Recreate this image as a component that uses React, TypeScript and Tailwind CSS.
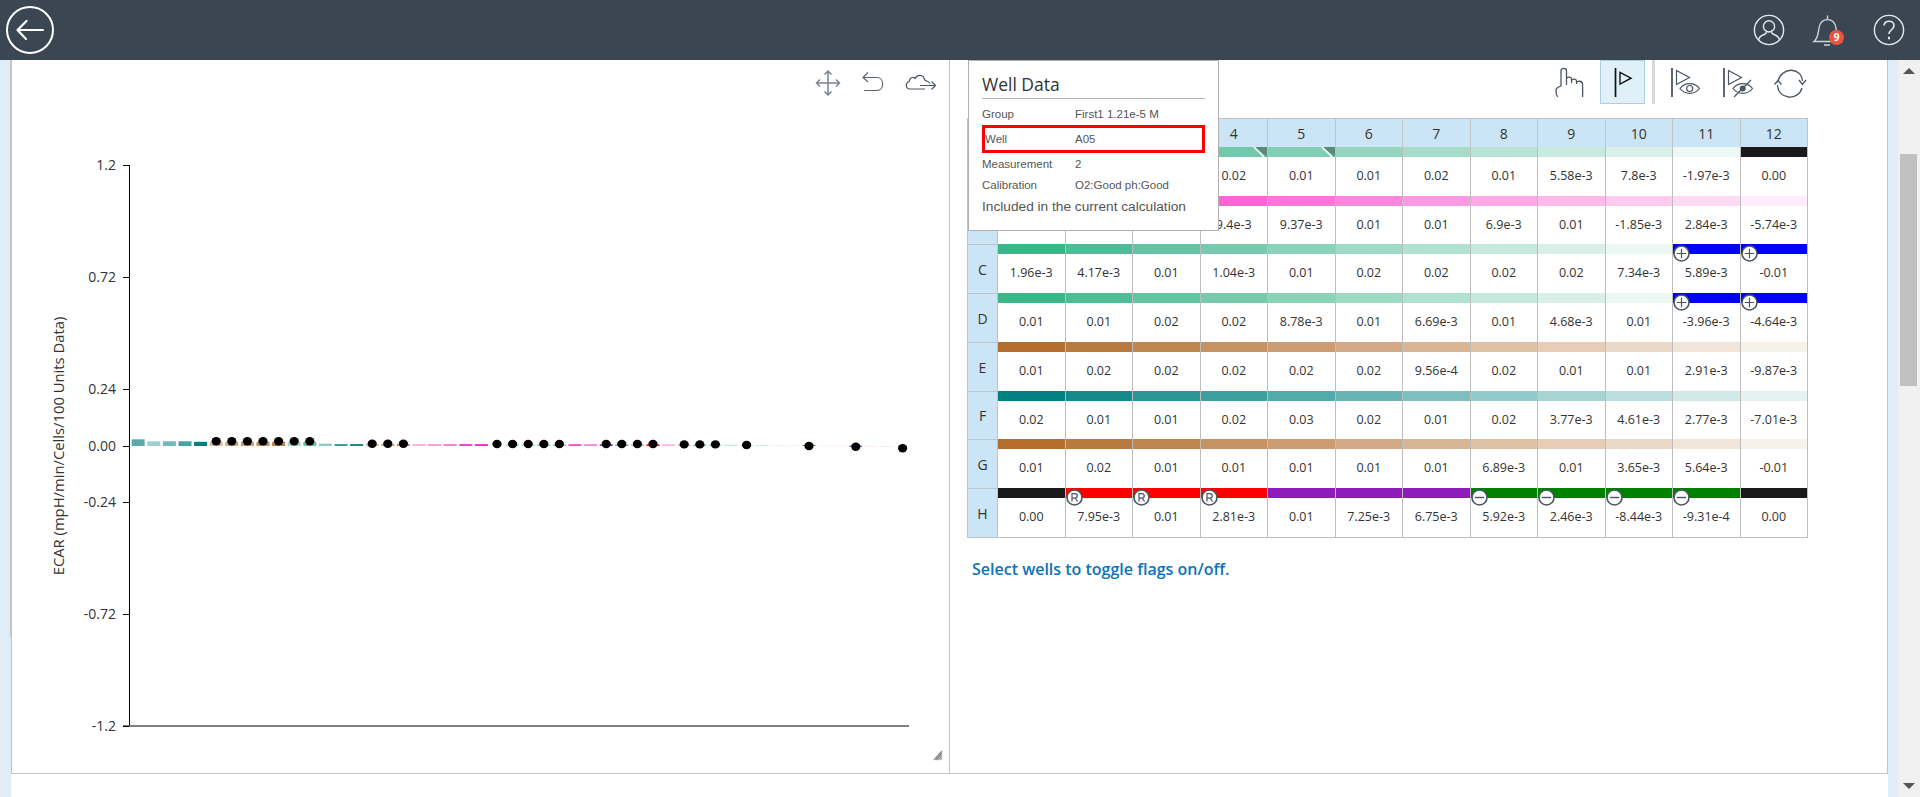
import type { ReactNode } from "react";

const FONT = "font-['Open_Sans',sans-serif]";
const ICON = "#4a5663";

// y position on the page for a given ECAR value
const yOf = (v: number) => 445.5 - v * 233.75;

const ticks = ["1.2", "0.72", "0.24", "0.00", "-0.24", "-0.72", "-1.2"];
const tickValues = [1.2, 0.72, 0.24, 0, -0.24, -0.72, -1.2];

type Point = { color: string; top: number; bottom?: number; dot?: number };

const chartPoints: Point[] = [
  { color: "#5ba9a9", top: 439.3, bottom: 446 },
  { color: "#9fd0d0", top: 441.3 },
  { color: "#72b9b9", top: 441.3 },
  { color: "#45a3a3", top: 441.3 },
  { color: "#00807e", top: 441.8 },
  { color: "#dcb89a", top: 441.8, dot: 441.3 },
  { color: "#d4a67e", top: 441.8, dot: 441.3 },
  { color: "#cc9a6c", top: 441.8, dot: 441.3 },
  { color: "#c58d5a", top: 441.8, dot: 441.3 },
  { color: "#bd7f45", top: 441.8, dot: 441.3 },
  { color: "#9fdcc3", top: 441.8, dot: 441.3 },
  { color: "#62c49c", top: 441.8, dot: 441.3 },
  { color: "#8ecbcb", top: 443.6 },
  { color: "#3f9f9f", top: 444 },
  { color: "#1a8c8c", top: 444 },
  { color: "#e0c4aa", top: 444, dot: 443.7 },
  { color: "#d4a67e", top: 444, dot: 443.7 },
  { color: "#c58d5a", top: 444, dot: 443.7 },
  { color: "#ffb0e6", top: 444 },
  { color: "#ff9de0", top: 444 },
  { color: "#ff7fd8", top: 444 },
  { color: "#ff3fc9", top: 444 },
  { color: "#ff33c6", top: 444 },
  { color: "#d7f0e6", top: 444.4, dot: 444 },
  { color: "#9fdcc3", top: 444.4, dot: 444 },
  { color: "#9fdcc3", top: 444.4, dot: 444 },
  { color: "#7dd0ae", top: 444.4, dot: 444 },
  { color: "#7dd0ae", top: 444.4, dot: 444 },
  { color: "#ff47cc", top: 444.2 },
  { color: "#ff7fd8", top: 444.2 },
  { color: "#8e1cb8", top: 444.4, dot: 444 },
  { color: "#62c49c", top: 444.4, dot: 444 },
  { color: "#d8b493", top: 444.4, dot: 444 },
  { color: "#ff0000", top: 444.4, dot: 444 },
  { color: "#ffb0e6", top: 444.4 },
  { color: "#e0c4aa", top: 444.6, dot: 444.4 },
  { color: "#62c49c", top: 444.6, dot: 444.4 },
  { color: "#b5e3d1", top: 444.6, dot: 444.4 },
  { color: "#c9e2e2", top: 444.8 },
  { color: "#c9e2e2", top: 445, dot: 445 },
  { color: "#cce4e4", top: 445 },
  { color: "#fdeaf7", top: 445 },
  { color: "#ecf7f3", top: 445 },
  { color: "#008000", top: 445.2, dot: 446 },
  { color: "#fdeaf7", top: 445.4, bottom: 446.4 },
  { color: "#fdeaf7", top: 445.4, bottom: 446.4 },
  { color: "#0000ff", top: 445.8, bottom: 446.6, dot: 446.7 },
  { color: "#fdeaf7", top: 446, bottom: 447 },
  { color: "#e8f2f2", top: 446, bottom: 447 },
  { color: "#f5efe8", top: 446.5, bottom: 447.5, dot: 448.3 },
];

// fade towards white used by the plate's colour bars, kept opaque so grid lines don't show through
const fade = (rgb: number[], count: number) =>
  Array.from({ length: count }, (_, i) => {
    const a = count > 1 ? 1 - (i * 0.9) / (count - 1) : 1;
    const [r, g, b] = rgb.map((v) => Math.round(255 - (255 - v) * a));
    return `rgb(${r},${g},${b})`;
  });

const green = [60, 181, 137];
const brown = [179, 110, 46];
const BLACK = "#1a1a1a";

type Row = { label: string; height: string; bars: string[]; values: string[] };

// labels and values that sit under the well popup are left blank
const rows: Row[] = [
  {
    label: "",
    height: "h-[49px]",
    bars: [...fade(green, 11), BLACK],
    values: ["", "", "", "0.02", "0.01", "0.01", "0.02", "0.01", "5.58e-3", "7.8e-3", "-1.97e-3", "0.00"],
  },
  {
    label: "",
    height: "h-[48px]",
    bars: fade([255, 51, 198], 12),
    values: ["", "", "", "9.4e-3", "9.37e-3", "0.01", "0.01", "6.9e-3", "0.01", "-1.85e-3", "2.84e-3", "-5.74e-3"],
  },
  {
    label: "C",
    height: "h-[49px]",
    bars: [...fade(green, 10), "#0000ff", "#0000ff"],
    values: ["1.96e-3", "4.17e-3", "0.01", "1.04e-3", "0.01", "0.02", "0.02", "0.02", "0.02", "7.34e-3", "5.89e-3", "-0.01"],
  },
  {
    label: "D",
    height: "h-[49px]",
    bars: [...fade(green, 10), "#0000ff", "#0000ff"],
    values: ["0.01", "0.01", "0.02", "0.02", "8.78e-3", "0.01", "6.69e-3", "0.01", "4.68e-3", "0.01", "-3.96e-3", "-4.64e-3"],
  },
  {
    label: "E",
    height: "h-[49px]",
    bars: fade(brown, 12),
    values: ["0.01", "0.02", "0.02", "0.02", "0.02", "0.02", "9.56e-4", "0.02", "0.01", "0.01", "2.91e-3", "-9.87e-3"],
  },
  {
    label: "F",
    height: "h-[48px]",
    bars: fade([0, 128, 128], 12),
    values: ["0.02", "0.01", "0.01", "0.02", "0.03", "0.02", "0.01", "0.02", "3.77e-3", "4.61e-3", "2.77e-3", "-7.01e-3"],
  },
  {
    label: "G",
    height: "h-[49px]",
    bars: fade(brown, 12),
    values: ["0.01", "0.02", "0.01", "0.01", "0.01", "0.01", "0.01", "6.89e-3", "0.01", "3.65e-3", "5.64e-3", "-0.01"],
  },
  {
    label: "H",
    height: "h-[49px]",
    bars: [BLACK, "#ff0000", "#ff0000", "#ff0000", "#8e1cb8", "#8e1cb8", "#8e1cb8", "#008000", "#008000", "#008000", "#008000", BLACK],
    values: ["0.00", "7.95e-3", "0.01", "2.81e-3", "0.01", "7.25e-3", "6.75e-3", "5.92e-3", "2.46e-3", "-8.44e-3", "-9.31e-4", "0.00"],
  },
];

const marks: Record<string, "R" | "plus" | "minus"> = {
  H1: "R", H2: "R", H3: "R",
  H7: "minus", H8: "minus", H9: "minus", H10: "minus",
  C10: "plus", C11: "plus", D10: "plus", D11: "plus",
};
const cornerFlags = ["A3", "A4"];

const WellMark = ({ kind }: { kind: "R" | "plus" | "minus" }) => (
  <svg viewBox="0 0 17 17" className="absolute left-[0px] top-[1px] w-[17px] h-[17px]">
    <circle cx="8.5" cy="8.5" r="7.5" fill="#fff" stroke={ICON} strokeWidth="1.6" />
    {kind === "R" && (
      <path d="M6 12.5V4.6h3a2.2 2.2 0 0 1 0 4.5H6m3.2 0 2.4 3.4" fill="none" stroke={ICON} strokeWidth="1.2" />
    )}
    {kind === "plus" && <path d="M3.8 8.5h9.4M8.5 3.8v9.4" stroke={ICON} strokeWidth="1.2" />}
    {kind === "minus" && <path d="M3.8 8.5h9.4" stroke={ICON} strokeWidth="1.4" />}
  </svg>
);

const CornerFlag = () => (
  <svg viewBox="0 0 14 10" className="absolute right-0 top-0 w-[14px] h-[10px]">
    <path d="M2 0h12v10z" fill="#5c8a78" />
    <path d="M1 0l10 10" stroke="#fff" strokeWidth="1.5" />
  </svg>
);

const Svg = ({ box, w, h, className, children }: { box: string; w: string; h: string; className?: string; children: ReactNode }) => (
  <svg viewBox={box} className={`${w} ${h} shrink-0 ${className ?? ""}`} fill="none">
    {children}
  </svg>
);

function Header() {
  return (
    <header className="h-[60px] shrink-0 bg-[#3a4652] flex items-center justify-between">
      <svg viewBox="0 0 60 60" className="w-[60px] h-[60px]" fill="none" stroke="#fff">
        <circle cx="30" cy="30" r="23" strokeWidth="2" />
        <path d="M43 30H18M26.5 21 17.5 30l8.5 9" strokeWidth="2.2" strokeLinecap="round" strokeLinejoin="round" />
      </svg>
      <div className="flex items-center">
        <svg viewBox="0 0 32 32" className="w-[32px] h-[32px]" fill="none" stroke="#e6e9ec" strokeWidth="1.4">
          <circle cx="16" cy="16" r="14.6" />
          <circle cx="16" cy="12.4" r="5.6" />
          <path d="M5.6 26c.5-4.4 4.4-5 6.6-6 .9-.5 1-1.2.8-2M26.4 26c-.5-4.4-4.4-5-6.6-6-.9-.5-1-1.2-.8-2" />
        </svg>
        <div className="relative ml-[26px] mt-[1px] w-[36px] h-[34px]">
          <svg viewBox="0 0 36 34" className="w-[36px] h-[34px]" fill="none" stroke="#cfd4d9" strokeWidth="1.4">
            <path d="M3 27.500c4-3 4-7.500 5-13.500.8-5 4-8.400 8.500-8.400s7.700 3.400 8.500 8.400c1 6 1 10.500 5 13.500z" />
            <path d="M16.500 5.600V1.500M13 31h6" />
          </svg>
          <span className={`absolute left-[18px] top-[16px] w-[15px] h-[15px] rounded-full bg-[#f0533a] text-white text-[10px] leading-[15px] font-bold text-center ${FONT}`}>
            9
          </span>
        </div>
        <svg viewBox="0 0 32 32" className="ml-[26px] mr-[15px] w-[32px] h-[32px]" fill="none" stroke="#e6e9ec" strokeWidth="1.4">
          <circle cx="16" cy="16" r="14.6" />
          <path d="M11 11.500c.4-3 2.600-4.200 5-4.200 2.800 0 5 1.700 5 4.300 0 4-5 4.300-5 8.400" strokeWidth="1.6" />
          <path d="M16 22.800v2.400" strokeWidth="2" />
        </svg>
      </div>
    </header>
  );
}

function ChartToolbar() {
  return (
    <div className="h-[45px] shrink-0 flex justify-end items-center pr-[11px]">
      <Svg box="815 62 26 30" w="w-[26px]" h="h-[30px]">
        <path d="M828 65v24M816.500 77h23M824.500 68.500 828 65l3.500 3.500M824.500 85.500 828 89l3.500-3.500M820 73.500 816.500 77l3.500 3.500M836 73.500l3.500 3.500-3.500 3.500" stroke="#7a858f" strokeWidth="1.5" />
      </Svg>
      <Svg box="860 62 26 30" w="w-[26px]" h="h-[30px]" className="ml-[19px]">
        <path d="M868 66.500 863 71.500l5 4.500M863 71.500h14c7.500 0 7.500 13 0 13h-13" stroke="#5b6671" strokeWidth="1.2" />
      </Svg>
      <Svg box="905 62 33 30" w="w-[33px]" h="h-[30px]" className="ml-[19px]">
        <path d="M925 83h-15c-4.500 0-5-6-.8-7.500.2-4 3.800-5 6-3 2-4.500 8.200-4 9.300 1 .4 1.500 4 1.500 5.500 3.800" stroke="#4a5663" strokeWidth="1.200" />
        <path d="M920 79.500h15.500M931.500 75.500l4 4-4 4" stroke="#4a5663" strokeWidth="1.200" />
      </Svg>
    </div>
  );
}

function Chart() {
  return (
    <svg viewBox="12 105 937 668" className="w-[937px] h-[668px] shrink-0">
      <text
        transform="translate(64 446) rotate(-90)"
        textAnchor="middle"
        className={`${FONT} text-[14.8px] fill-[#333]`}
      >
        ECAR (mpH/min/Cells/100 Units Data)
      </text>
      <line x1="129.500" y1="165" x2="129.500" y2="726" stroke="#000" />
      <line x1="123" y1="726" x2="909" y2="726" stroke="#555" strokeWidth="1.6" />
      {ticks.map((t, i) => (
        <g key={t}>
          <line x1="123" x2="129" y1={Math.round(yOf(tickValues[i])) + 0.5} y2={Math.round(yOf(tickValues[i])) + 0.5} stroke="#000" />
          <text x="116" y={yOf(tickValues[i]) + 5} textAnchor="end" className={`${FONT} text-[14px] fill-[#333]`}>
            {t}
          </text>
        </g>
      ))}
      {chartPoints.map((p, i) => {
        const x = 131.700 + i * 15.6;
        const bottom = p.bottom ?? 446;
        return <rect key={i} x={x} y={p.top} width="13" height={bottom - p.top} fill={p.color} />;
      })}
      {chartPoints.map((p, i) =>
        p.dot !== undefined ? <ellipse key={i} cx={131.700 + i * 15.6 + 6.5} cy={p.dot} rx="4.600" ry="4.200" fill="#000" /> : null
      )}
      <path d="M934 760l8-9M936 760l6-7M938 760l4-4.500M940.500 760l1.500-2" stroke="#8b8b8b" strokeWidth="1.200" />
    </svg>
  );
}

const PlateToolbar = () => (
  <div className="h-[44px] shrink-0 flex items-start justify-end pr-[80px]">
    <Svg box="1550 60 42 44" w="w-[42px]" h="h-[44px]">
      <path
        d="M1557.500 97c-1-2-2-4-1.500-7 .3-1.500 1.500-3 5-4V71c0-3.500 5.500-3.500 5.500 0v14-6c0-2.500 5-2.500 5 0v4-2c0-2.500 5-2.500 5 0v3-1c0-2.500 6-2.500 6 1 0 4 .5 8 0 13"
        stroke="#4a5663"
        strokeWidth="1.300"
      />
    </Svg>
    <div className="w-[45px] h-[44px] ml-[8px] bg-[#dff0f8] border border-[#a8d0e0] shrink-0">
      <Svg box="1601 61 43 42" w="w-[43px]" h="h-[42px]">
        <path d="M1615.500 68v29" stroke="#111" strokeWidth="1.700" />
        <path d="M1620 72.500v11.500l11-5.800z" stroke="#111" strokeWidth="1.400" />
      </Svg>
    </div>
    <div className="w-[3px] h-[44px] ml-[7px] bg-[#d8d8d8] shrink-0" />
    <Svg box="1665 60 40 44" w="w-[40px]" h="h-[44px]" className="ml-[10px]">
      <path d="M1672 68v29" stroke="#4a5663" strokeWidth="1.800" />
      <path d="M1676.500 70.500v14l13-7z" stroke="#4a5663" strokeWidth="1.200" />
      <path d="M1680 88.500c5-6.500 14.500-6.500 19.500 0-5 6.500-14.500 6.500-19.500 0z" stroke="#4a5663" strokeWidth="1.200" />
      <circle cx="1689.700" cy="88.500" r="3" stroke="#4a5663" strokeWidth="1.200" />
    </Svg>
    <Svg box="1719 60 40 44" w="w-[40px]" h="h-[44px]" className="ml-[14px]">
      <path d="M1724 68v29" stroke="#4a5663" strokeWidth="1.800" />
      <path d="M1728.500 70.500v14l13-7z" stroke="#4a5663" strokeWidth="1.200" />
      <path d="M1733 88.500c5-6.500 14.500-6.500 19.500 0-5 6.500-14.500 6.500-19.500 0z" stroke="#4a5663" strokeWidth="1.200" />
      <circle cx="1742.700" cy="88.500" r="3" fill="#4a5663" />
      <path d="M1734 97l17-17" stroke="#4a5663" strokeWidth="1.300" />
    </Svg>
    <Svg box="1773 60 34 44" w="w-[34px]" h="h-[44px]" className="ml-[14px]">
      <path d="M1777.500 85c.5 15 21 16 24.500 3M1802.500 81c-1-14-21-15-25 1" stroke="#4a5663" strokeWidth="1.300" />
      <path d="M1774.500 84.500l3.500-4 3.500 4M1799 80l3.500 4.500 3.500-4.500" stroke="#4a5663" strokeWidth="1.300" />
    </Svg>
  </div>
);

const HEADER_CELL = "bg-[#cbe5f7] border border-[#bdc5ca] text-[14px] text-[#333] font-normal p-0 text-center";

function PlateTable() {
  return (
    <table className={`${FONT} w-[840px] table-fixed border-collapse`}>
      <colgroup>
        <col className="w-[30px]" />
        {Array.from({ length: 12 }, (_, i) => (
          <col key={i} className="w-[67.5px]" />
        ))}
      </colgroup>
      <thead>
        <tr className="h-[29px]">
          <th className={HEADER_CELL} />
          {Array.from({ length: 12 }, (_, i) => (
            <th key={i} className={HEADER_CELL}>
              {i + 1}
            </th>
          ))}
        </tr>
      </thead>
      <tbody>
        {rows.map((row, r) => (
          <tr key={r} className={row.height}>
            <th className={HEADER_CELL}>{row.label}</th>
            {row.values.map((value, c) => {
              const id = `${"ABCDEFGH"[r]}${c}`;
              return (
                <td key={c} className="p-0 border border-[#bdbdbd] align-top">
                  <div className="relative">
                    <div className="relative -mt-[1px] h-[10px]" style={{ background: row.bars[c] }}>
                      {cornerFlags.includes(id) && <CornerFlag />}
                    </div>
                    <div className="h-[38px] flex items-center justify-center text-[12.5px] text-[#333]">{value}</div>
                    {marks[id] && <WellMark kind={marks[id]} />}
                  </div>
                </td>
              );
            })}
          </tr>
        ))}
      </tbody>
    </table>
  );
}

const infoRows = [
  { label: "Group", value: "First1 1.21e-5 M", box: false, h: "h-[22px]" },
  { label: "Well", value: "A05", box: true, h: "h-[28px]" },
  { label: "Measurement", value: "2", box: false, h: "h-[22px]" },
  { label: "Calibration", value: "O2:Good ph:Good", box: false, h: "h-[20px]" },
];

function WellPopup() {
  return (
    <div className="absolute left-[18px] top-0 w-[251px] h-[171px] bg-white border border-[#b0b0b0] px-[13px] font-['Liberation_Sans',sans-serif] text-[#555]">
      <h3 className={`${FONT} h-[38px] pt-[11px] text-[17.5px] leading-[24px] text-[#333] border-b border-[#b5b5b5]`}>Well Data</h3>
      <div className="pt-[4px]">
        {infoRows.map((r) => (
          <div
            key={r.label}
            className={`${r.h} flex items-center pt-[2px] text-[11.5px] ${r.box ? "border-[3px] border-[#ff0000]" : ""}`}
          >
            <span className={r.box ? "w-[90px]" : "w-[93px]"}>{r.label}</span>
            <span>{r.value}</span>
          </div>
        ))}
      </div>
      <p className="mt-[1px] text-[13.7px] leading-[22px]">Included in the current calculation</p>
    </div>
  );
}

export default function App() {
  return (
    <div className={`${FONT} h-[797px] w-[1920px] overflow-hidden flex flex-col bg-white`}>
      <Header />
      <div className="flex-1 flex min-h-0">
        <div className="w-[11px] shrink-0 bg-[#e0edf6]">
          <div className="ml-[10px] w-[1px] h-[577px] bg-[#c4c4c4]" />
        </div>
        <main className="flex-1 min-w-0 bg-white">
          <div className="h-[714px] flex border-x border-b border-[#c4c4c4]">
            <section className="w-[938px] shrink-0 border-r border-[#c4c4c4] flex flex-col">
              <ChartToolbar />
              <Chart />
            </section>
            <section className="relative flex-1 min-w-0 flex flex-col">
              <PlateToolbar />
              <div className="pl-[17px] mt-[14px]">
                <PlateTable />
                <p className="mt-[20px] pl-[5px] text-[16px] leading-[22px] font-semibold text-[#0a73bd]">Select wells to toggle flags on/off.</p>
              </div>
              <WellPopup />
            </section>
          </div>
        </main>
        <div className="w-[10px] shrink-0 bg-[#e0edf6]" />
        <div className="w-[22px] shrink-0 bg-[#f0f0f0] flex flex-col items-center justify-between py-[8px] relative">
          <div className="w-0 h-0 border-x-[6px] border-x-transparent border-b-[6px] border-b-[#555]" />
          <div className="absolute left-[2px] top-[94px] w-[17px] h-[232px] bg-[#c0c0c0]" />
          <div className="w-0 h-0 border-x-[6px] border-x-transparent border-t-[6px] border-t-[#555]" />
        </div>
      </div>
    </div>
  );
}
